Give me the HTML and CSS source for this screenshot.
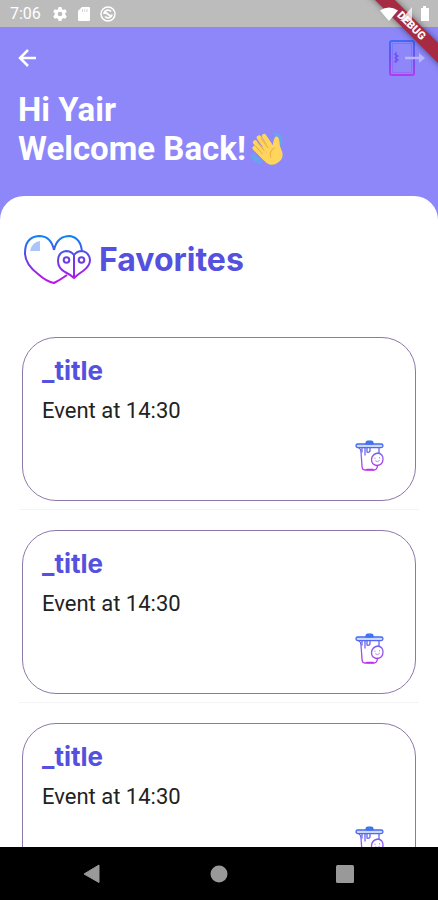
FILE: index.html
```html
<!DOCTYPE html>
<html lang="en">
<head>
<meta charset="utf-8">
<meta name="viewport" content="width=device-width, initial-scale=1">
<title>Favorites</title>
<link rel="stylesheet" href="styles.css">
</head>
<body>
<svg class="defs" aria-hidden="true">
  <defs>
    <linearGradient id="neon" gradientUnits="userSpaceOnUse" x1="0" y1="0" x2="0" y2="48">
      <stop offset="0" stop-color="#0a86f5"/><stop offset=".5" stop-color="#6a3fe0"/><stop offset="1" stop-color="#c010f0"/>
    </linearGradient>
    <linearGradient id="neon-small" gradientUnits="userSpaceOnUse" x1="0" y1="0" x2="0" y2="32">
      <stop offset="0" stop-color="#2b6cf0"/><stop offset=".5" stop-color="#8a62ea"/><stop offset="1" stop-color="#c425ee"/>
    </linearGradient>
    <linearGradient id="neon-door" gradientUnits="userSpaceOnUse" x1="0" y1="0" x2="0" y2="36">
      <stop offset="0" stop-color="#3d6cf8"/><stop offset=".5" stop-color="#6d50ee"/><stop offset="1" stop-color="#b13af0"/>
    </linearGradient>
    <symbol id="trash" viewBox="0 0 30 32">
      <g fill="none" stroke="url(#neon-small)" stroke-width="1.3" stroke-linecap="round" stroke-linejoin="round">
        <rect x="1" y="4" width="27" height="3.6" rx="1.8" fill="#c9dcff"/>
        <path d="M11 3.8Q11 1.2 13 1.2H16Q18 1.2 18 3.8Z" fill="#3e78f2"/>
        <path d="M4 8Q6 9 6 12L7 26Q7 30 10 30H19Q22 30 22.500 25.500"/>
        <path d="M7 8V12M10 8V15M12 12V8M15 8V11Q13.500 13 12.500 12M24 8V13"/>
        <path d="M23 13Q28 14 28 19Q28 25 22 25.500Q16.500 25 16.500 19.500Q17 14 23 13Z" fill="#fff"/>
        <path d="M20 18V18.500M24.500 17.500V18M20.500 21Q22.500 23 24.500 20.500" stroke-width="1" opacity=".7"/>
        <path d="M12 29.500H18" stroke-width="1.6"/>
      </g>
    </symbol>
  </defs>
</svg>
<div class="app">
  <div class="status">
    <span class="time">7:06</span>
    <svg width="16" height="16" viewBox="0 0 16 16" aria-hidden="true"><g fill="#fff"><path d="M6.500 1h3l.5 2.500H6zM6.500 15h3l.5-2.500H6z"/><path d="M6.500 1h3l.5 2.500H6zM6.500 15h3l.5-2.500H6z" transform="rotate(60 8 8)"/><path d="M6.500 1h3l.5 2.500H6zM6.500 15h3l.5-2.500H6z" transform="rotate(120 8 8)"/></g><circle cx="8" cy="8" r="3.800" fill="none" stroke="#fff" stroke-width="3"/></svg>
    <svg width="12" height="16" viewBox="0 0 12 16" aria-hidden="true"><path d="M4 1H11Q12 1 12 2V14Q12 15 11 15H1Q0 15 0 14V5Z" fill="#fff"/><path d="M4.500 3V6M6.700 3V6M9 3V6" stroke="#d5d5d5"/></svg>
    <svg width="16" height="16" viewBox="0 0 16 16" aria-hidden="true"><g fill="none" stroke="#fff" stroke-width="1.500"><circle cx="8" cy="8" r="7"/><path d="M4 8A4 4 0 0 1 11 5.500M5 10.500A4 4 0 0 0 12 8.500M5 6L11 10.500" stroke-width="1.800"/></g></svg>
    <svg class="signals" width="50" height="16" viewBox="0 0 50 16" aria-hidden="true"><path d="M0 4.500Q9 -1.500 18 4.500L9 15ZM41 2H43V0H46V2H49V15H41Z" fill="#fff"/><path d="M32 15V1L20 15Z" fill="#fff" opacity=".75"/></svg>
  </div>
  <header class="hero">
    <div class="toolbar">
      <button type="button" aria-label="Back"><svg width="20" height="20" viewBox="0 0 20 20"><path d="M18 10H2M10 2L2 10L10 18" fill="none" stroke="#fff" stroke-width="2.500"/></svg></button>
      <button type="button" aria-label="Log out"><svg width="38" height="38" viewBox="0 0 38 38"><g fill="none" stroke="url(#neon-door)"><rect x="2" y="2" width="24" height="34" rx="2" stroke-width="2"/><rect x="4.500" y="4.500" width="19" height="29" stroke-width="1" opacity=".35"/><path d="M8 13V24M6 15L10 17L7 19L10 21L6 23" stroke-width="1.300"/></g><path d="M17 19H33" stroke="#bbb5fa" stroke-width="2.500"/><path d="M31 14L37 19L31 24Z" fill="#bbb5fa"/></svg></button>
    </div>
    <p class="greeting">Hi Yair<br>Welcome Back!<svg class="wave" width="34" height="34" viewBox="0 0 36 36" role="img" aria-label="Waving hand"><path d="M23 1Q31-1 34 6Q36 13 31 14Q31 7 23 1ZM1 25Q3 34 12 34Q14 31 11 28Q6 24 3 23Z" fill="#69a2ee"/><g fill="none" stroke="#ffd65b" stroke-linecap="round" stroke-width="4.800"><path d="M15 4.500L24 18M9.500 6L21 22M5.500 11L18 26M5 17L16 28"/></g><path d="M13 27L24 15Q25 7 27 5Q30 4 31 9Q31 15 34 21Q36 28 30 32Q24 37 18 33Q14 30 10 25L15 12L22 14Z" fill="#ffd65b"/><path d="M12 7L19 16.500M7.500 10.500L15 19.500M6 15L13 23M26 17Q20 20 22 27" fill="none" stroke="#edb04a" stroke-width="1.100" stroke-linecap="round"/></svg></p>
  </header>
  <main class="sheet">
    <div class="heading">
      <svg width="68" height="50" viewBox="0 0 68 50" aria-hidden="true">
        <path d="M6 16Q8 7 16 6V16Z" fill="#a9c5fa"/>
        <g fill="none" stroke="url(#neon)" stroke-width="2" stroke-linejoin="round">
          <path d="M30 15Q27 1 15 1Q1 2 1 18Q1 29 14 39Q23 47 30 48Q36 45 43 40M30 15Q33 1 46 1Q57 3 58 17"/>
          <path d="M50 20Q47 16 42 16Q34 17 34 26Q34 33 41 37Q47 40 50 43Q53 40 59 36Q66 31 66 25Q65 17 58 16Q53 16 50 20ZM50 20V43" fill="#fff"/>
          <circle cx="42.500" cy="25" r="2.800"/><circle cx="57.500" cy="25" r="2.800"/>
        </g>
      </svg>
      <h1>Favorites</h1>
    </div>
    <ul class="events">
      <li><article class="card"><h2>_title</h2><p>Event at 14:30</p><button type="button" aria-label="Delete event"><svg width="30" height="32"><use href="#trash"/></svg></button></article></li>
      <li><article class="card"><h2>_title</h2><p>Event at 14:30</p><button type="button" aria-label="Delete event"><svg width="30" height="32"><use href="#trash"/></svg></button></article></li>
      <li><article class="card"><h2>_title</h2><p>Event at 14:30</p><button type="button" aria-label="Delete event"><svg width="30" height="32"><use href="#trash"/></svg></button></article></li>
    </ul>
  </main>
  <nav class="system" aria-label="System navigation">
    <button type="button" aria-label="Back"><svg width="20" height="20" viewBox="0 0 20 20"><path d="M17 1V18.500L2 10Z" fill="#999" stroke="#999" stroke-linejoin="round"/></svg></button>
    <button type="button" aria-label="Home"><svg width="20" height="20" viewBox="0 0 20 20"><circle cx="10" cy="10" r="8.500" fill="#999"/></svg></button>
    <button type="button" aria-label="Recent apps"><svg width="20" height="20" viewBox="0 0 20 20"><rect x="1" y="1" width="18" height="18" rx="1.500" fill="#999"/></svg></button>
  </nav>
  <div class="banner"><span>DEBUG</span></div>
</div>
</body>
</html>
```
FILE: styles.css
```css
* {
  box-sizing: border-box;
}

body,
h1,
h2,
p,
ul {
  margin: 0;
  padding: 0;
}

body {
  font-family: Roboto, sans-serif;
  color: #222;
}

.defs {
  position: absolute;
  width: 0;
  height: 0;
}

svg {
  display: block;
}

button {
  display: block;
  padding: 0;
  border: 0;
  background: none;
}

.app {
  position: relative;
  display: flex;
  flex-direction: column;
  height: 100vh;
  overflow: hidden;
  background: #8d87f9;
}

.status {
  display: flex;
  align-items: center;
  gap: 10px;
  height: 27px;
  padding: 0 8px 0 10px;
  background: #bcbcbc;
}

.time {
  margin-right: 1px;
  font-size: 16px;
  color: #fff;
}

.signals {
  position: relative;
  z-index: 2;
  margin-left: auto;
}

.hero {
  padding: 12px 12px 28px 18px;
}

.toolbar {
  display: flex;
  align-items: center;
  justify-content: space-between;
  height: 38px;
  margin-bottom: 13px;
}

.greeting {
  font-size: 33px;
  font-weight: 700;
  line-height: 39px;
  color: #fff;
}

.wave {
  display: inline-block;
  margin-left: 4px;
  vertical-align: -6px;
}

.sheet {
  flex: 1;
  min-height: 0;
  padding: 39px 19px 0;
  overflow: hidden;
  border-radius: 24px 24px 0 0;
  background: #fff;
}

.heading {
  display: flex;
  align-items: center;
  gap: 7px;
  height: 50px;
  padding-left: 5px;
}

h1,
h2 {
  font-family: Inter, sans-serif;
  font-weight: 700;
  color: #5451de;
}

h1 {
  font-size: 32px;
  line-height: 40px;
}

.events {
  padding-top: 52px;
  list-style: none;
}

.events li {
  height: 193px;
  padding: 0 3px;
}

.events li::after {
  content: "";
  display: block;
  height: 1px;
  margin: 8px -3px 0;
  background: #f4f4f6;
}

.card {
  height: 164px;
  padding: 19px 30px 0 19px;
  border: 1px solid #8d78a8;
  border-radius: 34px;
}

h2 {
  font-size: 26px;
  line-height: 28px;
}

.card p {
  margin-top: 12px;
  font-size: 22px;
  line-height: 28px;
}

.card button {
  margin: 15px 0 0 auto;
}

.system {
  display: flex;
  align-items: center;
  justify-content: space-between;
  height: 53px;
  padding: 0 83px 0 82px;
  background: #000;
}

.banner {
  position: absolute;
  top: 0;
  right: 0;
  width: 80px;
  height: 80px;
  overflow: hidden;
  pointer-events: none;
}

.banner span {
  position: absolute;
  top: 19px;
  right: -33px;
  width: 120px;
  transform: rotate(45deg);
  background: #a62b42;
  box-shadow: 0 0 6px rgba(0, 0, 0, 0.5);
  font-size: 11px;
  font-weight: 900;
  line-height: 14px;
  text-align: center;
  color: #fff;
}
```
